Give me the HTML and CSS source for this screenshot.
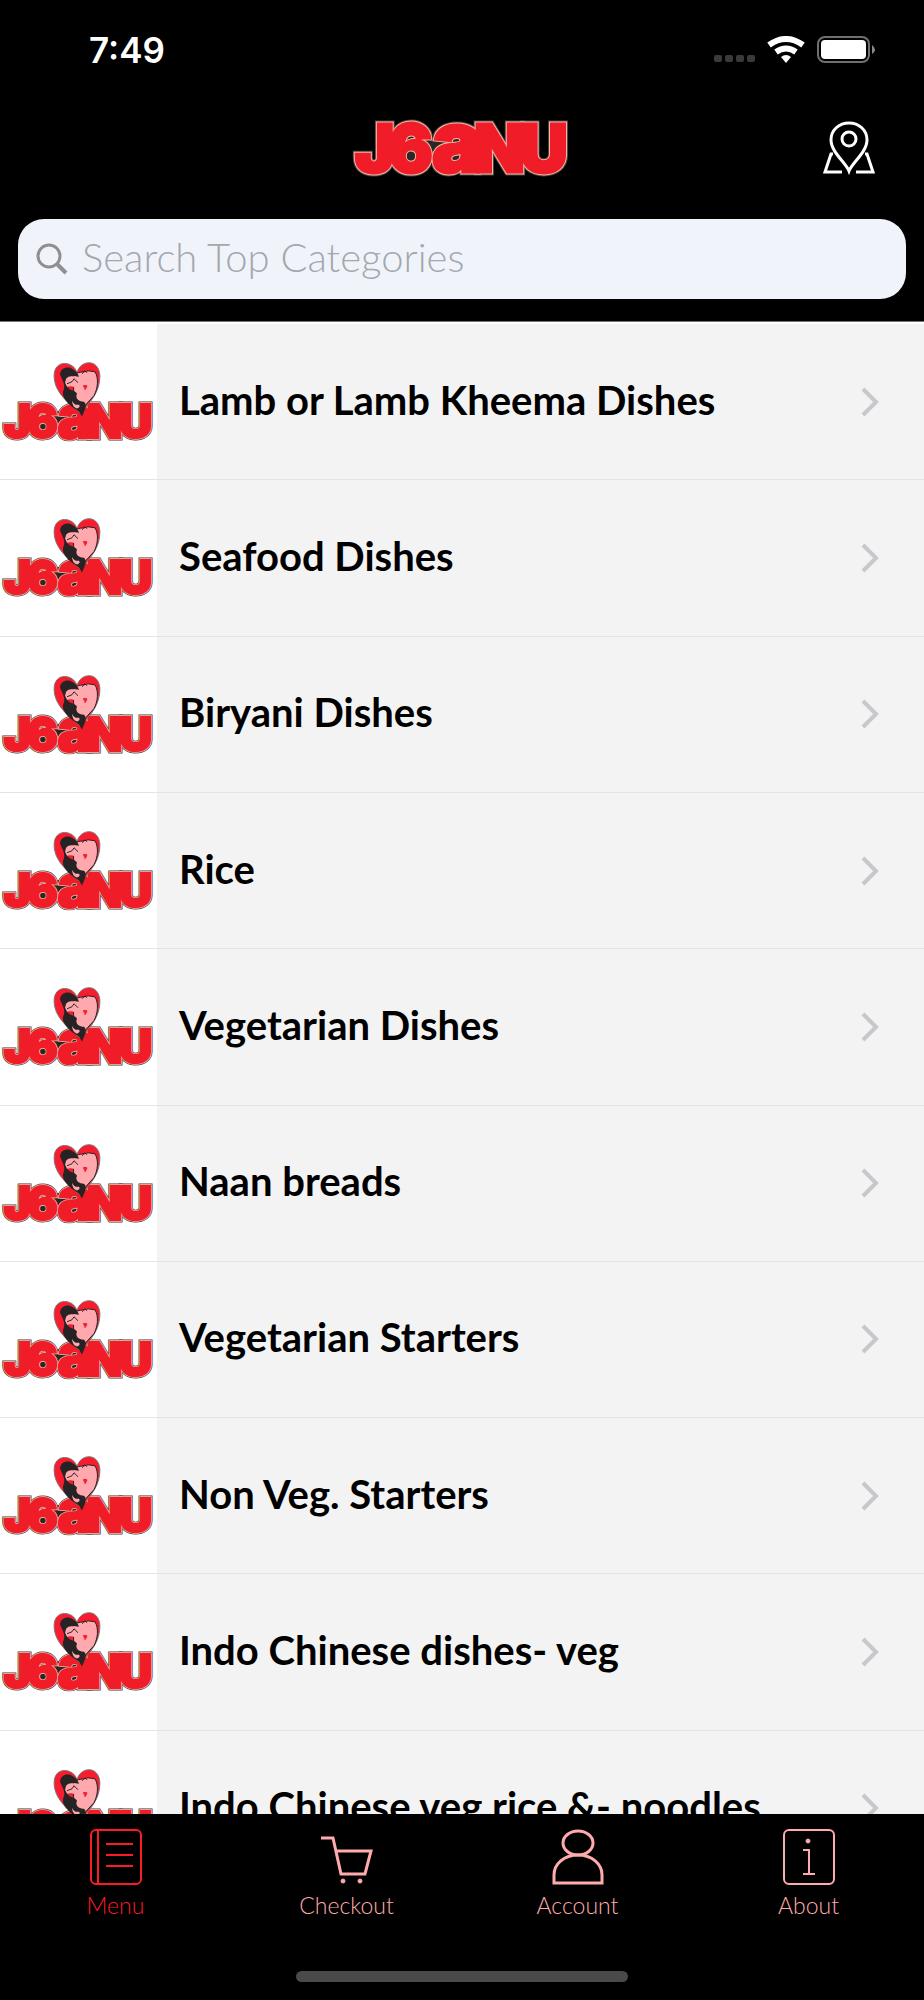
FILE: index.html
```html
<!DOCTYPE html>
<html lang="en">
<head>
<meta charset="utf-8">
<meta name="viewport" content="width=device-width, initial-scale=1">
<title>Menu</title>
<link rel="stylesheet" href="styles.css">
</head>
<body>
<svg class="defs" aria-hidden="true">
  <defs>
    <text id="letters" class="wordmark" y="49"><tspan x="0">J</tspan><tspan x="33">6</tspan><tspan x="77" class="tall">a</tspan><tspan x="119">N</tspan><tspan x="165">U</tspan></text>
    <symbol id="logo" viewBox="-5 -4 224 58">
      <use href="#letters" class="outline-dark"/>
      <path d="M50 11H112V42H50Z" fill="#2b2726"/>
      <use href="#letters" class="outline-light"/>
      <use href="#letters" class="fill-red"/>
    </symbol>
    <symbol id="badge" viewBox="0 0 157 156">
      <use href="#logo" x="0" y="77" width="157" height="41"/>
      <path d="M77 49C74 37 54 35 54 52C54 67 66 78 80 89C92 78 100 67 100 52C99 34 80 36 77 49Z" fill="#f81c2e" stroke="#777" stroke-width="1"/>
      <path d="M73 52C78 47 84 49 88 47L95 48C99 54 98 65 94 72L84 83L74 75Z" fill="#ffa9ae" stroke="#222" stroke-width="1"/>
      <path d="M60 51C60 44 68 42 72 45C76 47 78 50 79 53L72 52L66 57L67 63C71 68 75 66 77 70C75 74 78 78 84 78C88 81 84 88 82 93L79 88L73 84C67 79 62 74 63 68C66 62 63 58 60 51Z" fill="#272324"/>
      <path d="M66 55C69 51 76 52 79 56L79 62C75 65 71 61 67 63L65 59Z" fill="#ffa9ae"/>
      <path d="M67 60L72 58L74 55L78 59M82 50L85 47L87 49" fill="none" stroke="#272324" stroke-width="1"/>
      <path d="M72 77Q74 82 79 81Q81 83 77 85Q72 83 72 77Z" fill="#ffa9ae"/>
      <path d="M85 65C83 62 83 61 85 62C87 61 88 62 85 66Z" fill="#f81c2e" stroke="#f81c2e" stroke-width="1"/>
    </symbol>
    <symbol id="chevron" viewBox="0 0 18 30"><path d="M2 2L15 15L2 28" fill="none" stroke="#c7c7cc" stroke-width="4"/></symbol>
  </defs>
</svg>
<div class="app">
  <header class="header">
    <div class="status">
      <span class="time">7:49</span>
      <svg class="indicators" viewBox="0 0 164 28" aria-hidden="true">
        <g fill="#3a3a3a"><rect x="0" y="19" width="8" height="7" rx="2"/><rect x="11" y="19" width="8" height="7" rx="2"/><rect x="22" y="19" width="8" height="7" rx="2"/><rect x="33" y="19" width="8" height="7" rx="2"/></g>
        <g fill="none" stroke="#fff" stroke-width="6"><path d="M55 9Q72 -3 89 9"/><path d="M62 16Q72 9 82 16"/></g>
        <path d="M67 21Q72 17 77 21L72 27Z" fill="#fff"/>
        <rect x="104" y="1" width="51" height="25" rx="7" fill="none" stroke="#707070" stroke-width="2"/>
        <rect x="107" y="4" width="45" height="19" rx="4" fill="#fff"/>
        <path d="M158 9Q164 14 158 18Z" fill="#8a8a8a"/>
      </svg>
    </div>
    <div class="brand">
      <svg class="logo" role="img" aria-label="Logo"><use href="#logo"/></svg>
      <button class="locate" type="button" aria-label="Find a location">
        <svg viewBox="0 0 52 54" fill="none" stroke="#fff" stroke-width="3"><path d="M26 50C23 42 8 31 8 19C8 9 16 2 26 2C36 2 44 9 44 19C44 31 29 42 26 50Z"/><circle cx="26" cy="18" r="7"/><path d="M10 33H8L2 51H19M42 33H44L50 51H33"/></svg>
      </button>
    </div>
    <label class="search">
      <svg class="glass" viewBox="0 0 32 32" fill="none" stroke="#8e8e93" aria-hidden="true"><circle cx="13" cy="13" r="11" stroke-width="3"/><path d="M21 21L30 30" stroke-width="4"/></svg>
      <input type="search" placeholder="Search Top Categories" aria-label="Search Top Categories">
    </label>
  </header>
  <main class="content">
    <ul class="list">
      <li><a href="#"><svg class="thumb" aria-hidden="true"><use href="#badge"/></svg><span>Lamb or Lamb Kheema Dishes</span><svg class="chevron" aria-hidden="true"><use href="#chevron"/></svg></a></li>
      <li><a href="#"><svg class="thumb" aria-hidden="true"><use href="#badge"/></svg><span>Seafood Dishes</span><svg class="chevron" aria-hidden="true"><use href="#chevron"/></svg></a></li>
      <li><a href="#"><svg class="thumb" aria-hidden="true"><use href="#badge"/></svg><span>Biryani Dishes</span><svg class="chevron" aria-hidden="true"><use href="#chevron"/></svg></a></li>
      <li><a href="#"><svg class="thumb" aria-hidden="true"><use href="#badge"/></svg><span>Rice</span><svg class="chevron" aria-hidden="true"><use href="#chevron"/></svg></a></li>
      <li><a href="#"><svg class="thumb" aria-hidden="true"><use href="#badge"/></svg><span>Vegetarian Dishes</span><svg class="chevron" aria-hidden="true"><use href="#chevron"/></svg></a></li>
      <li><a href="#"><svg class="thumb" aria-hidden="true"><use href="#badge"/></svg><span>Naan breads</span><svg class="chevron" aria-hidden="true"><use href="#chevron"/></svg></a></li>
      <li><a href="#"><svg class="thumb" aria-hidden="true"><use href="#badge"/></svg><span>Vegetarian Starters</span><svg class="chevron" aria-hidden="true"><use href="#chevron"/></svg></a></li>
      <li><a href="#"><svg class="thumb" aria-hidden="true"><use href="#badge"/></svg><span>Non Veg. Starters</span><svg class="chevron" aria-hidden="true"><use href="#chevron"/></svg></a></li>
      <li><a href="#"><svg class="thumb" aria-hidden="true"><use href="#badge"/></svg><span>Indo Chinese dishes- veg</span><svg class="chevron" aria-hidden="true"><use href="#chevron"/></svg></a></li>
      <li><a href="#"><svg class="thumb" aria-hidden="true"><use href="#badge"/></svg><span>Indo Chinese veg rice &amp;- noodles</span><svg class="chevron" aria-hidden="true"><use href="#chevron"/></svg></a></li>
    </ul>
  </main>
  <footer class="footer">
    <nav class="tabs">
      <a class="tab active" href="#" aria-current="page"><svg viewBox="0 0 52 56"><g stroke-width="2"><rect x="1" y="1" width="50" height="54" rx="5"/><path d="M8 1V55M16 15H43M16 26H43M16 37H43"/></g></svg><span>Menu</span></a>
      <a class="tab" href="#"><svg viewBox="0 0 52 56"><g stroke-width="3"><path d="M0 9H12L20 45H44L50 22H15"/></g><g class="solid"><circle cx="22" cy="52" r="2"/><circle cx="39" cy="52" r="2"/></g></svg><span>Checkout</span></a>
      <a class="tab" href="#"><svg viewBox="0 0 52 56"><g stroke-width="3"><ellipse cx="26" cy="14" rx="15" ry="12"/><path d="M2 54V46C2 35 12 26 26 26C40 26 50 35 50 46V54Z"/></g></svg><span>Account</span></a>
      <a class="tab" href="#"><svg viewBox="0 0 52 56"><g stroke-width="2"><rect x="1" y="1" width="50" height="54" rx="5"/><path d="M20 21H26V45M20 45H32"/></g><circle class="solid" cx="25" cy="12" r="2"/></svg><span>About</span></a>
    </nav>
    <div class="home-bar"></div>
  </footer>
</div>
</body>
</html>
```

FILE: styles.css
```css
* { box-sizing: border-box; }
body { margin: 0; font-family: Lato, sans-serif; background: #000; color: #fff; }
a { color: inherit; text-decoration: none; }
svg { display: block; flex-shrink: 0; }

.defs { position: absolute; width: 0; height: 0; }
.wordmark { font: 900 66px Inter, sans-serif; }
.tall { font-size: 85px; }
.outline-dark { fill: #4a4442; stroke: #4a4442; stroke-width: 7; }
.outline-light { fill: #f2b9a8; stroke: #f2b9a8; stroke-width: 5; }
.fill-red { fill: #f01c27; stroke: #f01c27; stroke-width: 3; }

.app { display: flex; flex-direction: column; height: 100vh; }

.header { padding-bottom: 22px; border-bottom: 1px solid #777; }
.status { display: flex; justify-content: space-between; align-items: center; height: 100px; padding: 0 46px 0 89px; }
.time { font: 600 35px Inter, sans-serif; }
.indicators { width: 164px; height: 28px; }
.brand { display: grid; grid-template-columns: 1fr auto 1fr; align-items: center; height: 96px; padding: 0 49px; }
.logo { grid-column: 2; width: 224px; height: 58px; }
.locate { justify-self: end; width: 52px; height: 54px; padding: 0; border: 0; background: none; }
.search { display: flex; align-items: center; gap: 14px; height: 80px; margin: 23px 18px 0; padding: 0 18px; border-radius: 26px; background: #f0f4fa; }
.glass { width: 32px; height: 32px; }
.search input { flex: 1; min-width: 0; padding: 0 0 4px; border: 0; outline: 0; background: none; color: #000; font: 300 40px Lato, sans-serif; }
.search input::placeholder { color: #a4a7ae; opacity: 1; }

.content { flex: 1; min-height: 0; padding-top: 2px; overflow: hidden; background: #fff; }
.list { display: grid; grid-auto-rows: 1fr; min-height: 1563px; margin: 0; padding: 0; list-style: none; }
.list li { border-bottom: 1px solid #e4e4e5; background: #f3f3f3; color: #000; }
.list a { display: flex; align-items: center; height: 100%; padding-right: 45px; font-size: 40px; font-weight: 700; line-height: 48px; }
.list span { flex: 1; padding: 0 0 4px 22px; }
.thumb { width: 157px; height: 100%; background: #fff; }
.chevron { width: 18px; height: 30px; }

.footer { display: flex; flex-direction: column; justify-content: space-between; height: 186px; padding: 15px 0 18px; }
.tabs { display: grid; grid-template-columns: repeat(4, 1fr); }
.tab { display: flex; flex-direction: column; align-items: center; gap: 6px; color: #ffabae; font-size: 23px; font-weight: 300; line-height: 28px; }
.tab svg { width: 52px; height: 56px; fill: none; stroke: currentColor; }
.tab .solid { fill: currentColor; }
.active { color: #fb1b25; }
.home-bar { align-self: center; width: 36%; height: 11px; border-radius: 6px; background: #4a4a4a; }
```
